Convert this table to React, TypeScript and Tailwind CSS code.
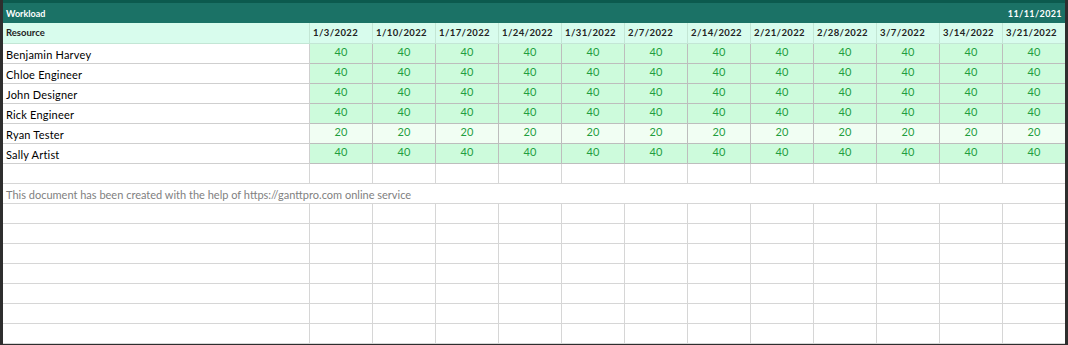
import React from 'react';

const dates = ['1/3/2022', '1/10/2022', '1/17/2022', '1/24/2022', '1/31/2022', '2/7/2022', '2/14/2022', '2/21/2022', '2/28/2022', '3/7/2022', '3/14/2022', '3/21/2022'];

const resources = [
  { name: 'Benjamin Harvey', hours: 40 },
  { name: 'Chloe Engineer', hours: 40 },
  { name: 'John Designer', hours: 40 },
  { name: 'Rick Engineer', hours: 40 },
  { name: 'Ryan Tester', hours: 20 },
  { name: 'Sally Artist', hours: 40 },
];

const grid = 'grid grid-cols-[307px_repeat(11,63px)_62px]';

const EmptyRow = () => (
  <div className={`${grid} h-[20px]`}>
    <div className="border-b border-r border-[#d6d6d6]" />
    {dates.map(d => (
      <div key={d} className="border-b border-r border-[#d6d6d6] last:border-r-0" />
    ))}
  </div>
);

export default function App() {
  return (
    <div className="w-[1068px] h-[345px] bg-white border-l-[3px] border-r-[3px] border-b-[1px] border-[#2e2e2e] font-['Lato','Noto_Sans',sans-serif] overflow-hidden">
      <div className="h-[3px] bg-[#0c5a4e]" />

      {/* title bar */}
      <div className="h-[20px] bg-[#1b7266] flex items-center justify-between px-[3px] pt-[1px] text-white text-[9px] font-bold">
        <span>Workload</span>
        <span className="tracking-[0.4px]">11/11/2021</span>
      </div>

      {/* header */}
      <div className={`${grid} h-[21px] bg-[#d8fced] text-[9.5px] font-bold text-[#222]`}>
        <div className="border-b border-r border-[#c3e6d5] flex items-center px-[3px]">Resource</div>
        {dates.map(d => (
          <div key={d} className="border-b border-r border-[#c3e6d5] last:border-r-0 flex items-center px-[3px] tracking-[0.4px]">
            {d}
          </div>
        ))}
      </div>

      {resources.map(r => (
        <div key={r.name} className={`${grid} h-[20px]`}>
          <div className="border-b border-r border-[#cfcfcf] flex items-end pl-[3px] text-[11px] tracking-[0.2px] text-black">
            {r.name}
          </div>
          {dates.map(d => (
            <div
              key={d}
              className={`border-b border-r border-[#bdbdbd] last:border-r-0 flex items-center justify-center pb-[2px] text-[11px] text-[#1f9e3f] ${r.hours === 40 ? 'bg-[#cdfbdc]' : 'bg-[#f1fef3]'}`}
            >
              {r.hours}
            </div>
          ))}
        </div>
      ))}

      <EmptyRow />

      <div className="h-[20px] border-b border-[#d6d6d6] flex items-end pl-[3px] text-[11px] text-[#7f7f7f]">
        This document has been created with the help of https://ganttpro.com online service
      </div>

      {Array.from({ length: 7 }).map((_, i) => (
        <EmptyRow key={i} />
      ))}
    </div>
  );
}
